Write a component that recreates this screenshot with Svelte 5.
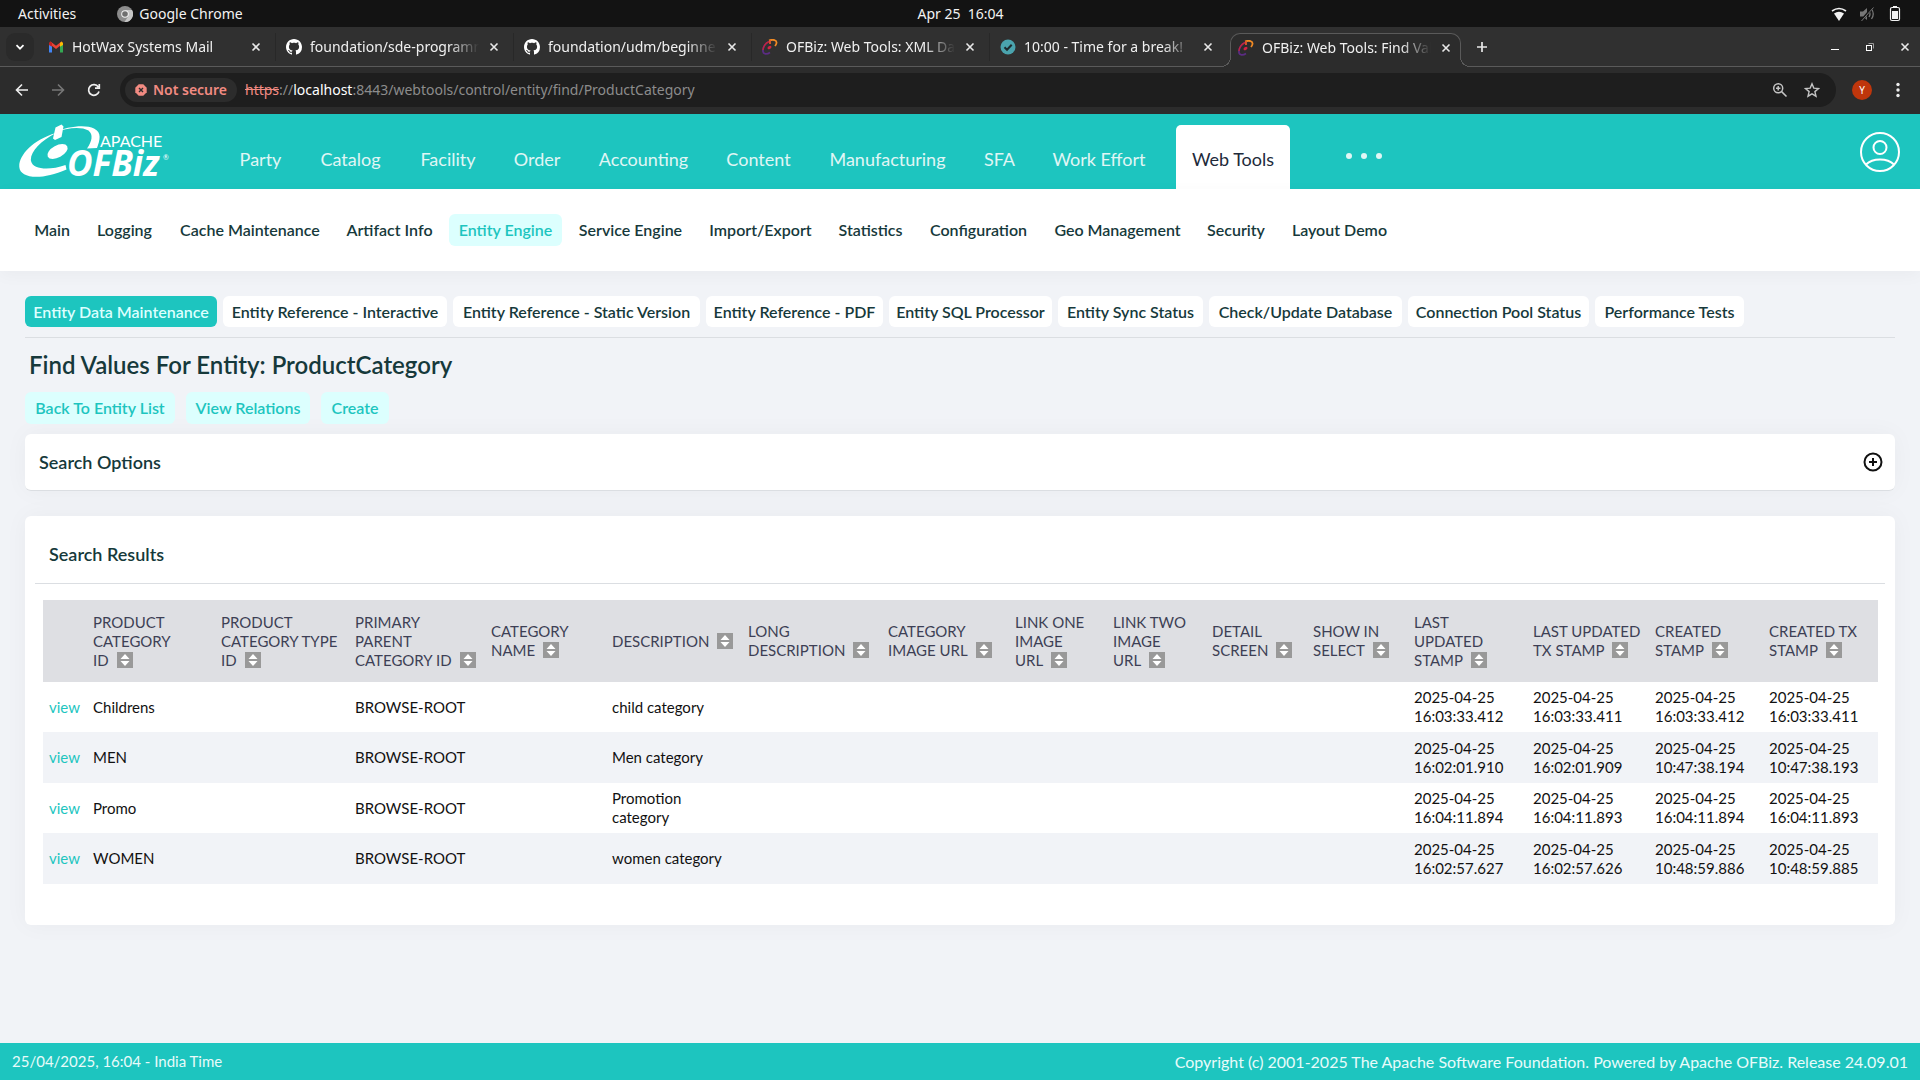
<script>
  const tabs = [
    { icon: 'gmail', title: 'HotWax Systems Mail' },
    { icon: 'github', title: 'foundation/sde-programming' },
    { icon: 'github', title: 'foundation/udm/beginner' },
    { icon: 'ofbiz', title: 'OFBiz: Web Tools: XML Data' },
    { icon: 'check', title: '10:00 - Time for a break!' },
    { icon: 'ofbiz', title: 'OFBiz: Web Tools: Find Values', active: true },
  ];
  const apps = ['Party', 'Catalog', 'Facility', 'Order', 'Accounting', 'Content', 'Manufacturing', 'SFA', 'Work Effort', 'Web Tools'];
  const sections = ['Main', 'Logging', 'Cache Maintenance', 'Artifact Info', 'Entity Engine', 'Service Engine', 'Import/Export', 'Statistics', 'Configuration', 'Geo Management', 'Security', 'Layout Demo'];
  const tools = ['Entity Data Maintenance', 'Entity Reference - Interactive', 'Entity Reference - Static Version', 'Entity Reference - PDF', 'Entity SQL Processor', 'Entity Sync Status', 'Check/Update Database', 'Connection Pool Status', 'Performance Tests'];
  const columns = [
    { w: 128, lines: ['PRODUCT', 'CATEGORY', 'ID'] },
    { w: 134, lines: ['PRODUCT', 'CATEGORY TYPE', 'ID'] },
    { w: 136, lines: ['PRIMARY', 'PARENT', 'CATEGORY ID'] },
    { w: 121, lines: ['CATEGORY', 'NAME'] },
    { w: 136, lines: ['DESCRIPTION'] },
    { w: 140, lines: ['LONG', 'DESCRIPTION'] },
    { w: 127, lines: ['CATEGORY', 'IMAGE URL'] },
    { w: 98, lines: ['LINK ONE', 'IMAGE', 'URL'] },
    { w: 99, lines: ['LINK TWO', 'IMAGE', 'URL'] },
    { w: 101, lines: ['DETAIL', 'SCREEN'] },
    { w: 101, lines: ['SHOW IN', 'SELECT'] },
    { w: 119, lines: ['LAST', 'UPDATED', 'STAMP'] },
    { w: 122, lines: ['LAST UPDATED', 'TX STAMP'] },
    { w: 114, lines: ['CREATED', 'STAMP'] },
    { w: 115, lines: ['CREATED TX', 'STAMP'] },
  ];
  const rows = [
    { id: 'Childrens', desc: ['child category'], times: ['16:03:33.412', '16:03:33.411', '16:03:33.412', '16:03:33.411'] },
    { id: 'MEN', desc: ['Men category'], times: ['16:02:01.910', '16:02:01.909', '10:47:38.194', '10:47:38.193'] },
    { id: 'Promo', desc: ['Promotion', 'category'], times: ['16:04:11.894', '16:04:11.893', '16:04:11.894', '16:04:11.893'] },
    { id: 'WOMEN', desc: ['women category'], times: ['16:02:57.627', '16:02:57.626', '10:48:59.886', '10:48:59.885'] },
  ];
</script>

{#snippet favicon(kind)}
  {#if kind === 'gmail'}
    <svg class="fav" viewBox="0 0 16 16">
      <path d="M1 13.5V4h3v9.500z" fill="#4285f4" />
      <path d="M12 13.500V4h3v9.500z" fill="#34a853" />
      <path d="M1 4.500 2.500 2.600 8 6.800l5.500-4.200L15 4.500 8 10z" fill="#ea4335" />
      <path d="M12 4l1.500-1.400L15 4v2l-3 1.800z" fill="#fbbc04" />
      <path d="M4 4 2.500 2.600 1 4v2l3 1.800z" fill="#c5221f" />
    </svg>
  {:else if kind === 'github'}
    <svg class="fav" viewBox="0 0 16 16" fill="#fff">
      <path d="M8 0C3.580 0 0 3.580 0 8c0 3.540 2.290 6.530 5.470 7.590.4.070.55-.17.55-.38 0-.19-.01-.82-.01-1.490-2.010.37-2.530-.49-2.690-.94-.09-.23-.48-.94-.82-1.130-.28-.15-.68-.52-.01-.53.63-.01 1.080.58 1.230.82.72 1.210 1.870.87 2.330.66.070-.52.280-.87.510-1.070-1.780-.2-3.640-.89-3.640-3.950 0-.87.310-1.590.820-2.150-.080-.2-.360-1.020.080-2.120 0 0 .670-.210 2.200.820.640-.180 1.320-.270 2-.270s1.360.090 2 .270c1.530-1.040 2.200-.820 2.200-.820.440 1.100.160 1.920.080 2.120.510.560.820 1.270.820 2.150 0 3.070-1.870 3.750-3.650 3.950.290.250.540.730.540 1.480 0 1.070-.010 1.930-.010 2.200 0 .210.150.460.550.380A8.010 8.010 0 0 0 16 8c0-4.420-3.580-8-8-8z" />
    </svg>
  {:else if kind === 'check'}
    <svg class="fav" viewBox="0 0 16 16">
      <circle cx="8" cy="8" r="7.500" fill="#4aa3ad" />
      <path d="M4.500 8.200 7 10.700l4.700-5" fill="none" stroke="#1e2a2d" stroke-width="2" />
    </svg>
  {:else}
    <svg class="fav" viewBox="0 0 16 16" fill="none">
      <path d="M7 2.500C3 4 .6 9 1 12.500c.4 3 4 3 7 1" stroke="#5b2c83" stroke-width="1.800" />
      <path d="M7.500 2.300C3.500 4 1.200 7.500 1 11" stroke="#c8233a" stroke-width="1.300" />
      <path d="M7 1.500c4-1.500 8-.5 7.500 2.500-.2 1.500-.8 2.200-1.500 3" stroke="#f08a24" stroke-width="1.800" />
      <path d="M8 1v4" stroke="#e0562b" stroke-width="1.800" />
      <ellipse cx="7.500" cy="8.500" rx="2.200" ry="1.400" fill="#d22344" transform="rotate(-35 7.500 8.500)" />
    </svg>
  {/if}
{/snippet}

{#snippet cross()}
  <svg class="x" viewBox="0 0 10 10"><path d="M1.500 1.500l7 7M8.500 1.500l-7 7" stroke="#e8e8e8" stroke-width="1.600" /></svg>
{/snippet}

<div class="screen">
  <div class="desktop-bar">
    <div class="left">
      <button type="button">Activities</button>
      <button type="button" class="running">
        <svg width="16" height="16" viewBox="0 0 16 16">
          <circle cx="8" cy="8" r="8" fill="#8c8c8c" />
          <path d="M8 4h7a8 8 0 0 1-7.500 12L11.400 10z" fill="#c6c6c6" />
          <circle cx="8" cy="8" r="3.800" fill="#f2f2f2" /><circle cx="8" cy="8" r="2.800" fill="#6f6f6f" />
        </svg>
        Google Chrome
      </button>
    </div>
    <button type="button" class="clock">Apr 25&nbsp; 16:04</button>
    <div class="status">
      <svg width="16" height="16" viewBox="0 0 16 16"><path d="M8 15 3 7.500q5-3.500 10 0z" fill="#f2f2f2" /><path d="M1 5q7-5 14 0" fill="none" stroke="#f2f2f2" stroke-width="1.600" /></svg>
      <svg width="16" height="16" viewBox="0 0 16 16"><path d="M1 5.500h3L8 2v12l-4-3.500H1z" fill="#777" /><path d="M10 5q2 3 0 6M12.500 3q3.500 5 0 10" fill="none" stroke="#777" stroke-width="1.300" /><path d="M14 1 2 15" stroke="#131313" stroke-width="2.500" /><path d="M14.500 1.500 2.500 15" stroke="#777" /></svg>
      <svg width="16" height="16" viewBox="0 0 16 16"><path d="M6 0h4v2H6z" fill="#f2f2f2" /><rect x="3.500" y="1.500" width="9" height="13" rx="1.500" fill="none" stroke="#f2f2f2" stroke-width="1.200" /><rect x="5" y="5" width="6" height="8" fill="#f2f2f2" /></svg>
    </div>
  </div>

  <div class="tabstrip">
    <button type="button" class="tabsearch" aria-label="Search tabs">
      <svg width="10" height="10" viewBox="0 0 10 10"><path d="M1.500 3.200 5 6.700l3.500-3.500" fill="none" stroke="#fff" stroke-width="1.700" /></svg>
    </button>
    <div class="tabs">
      {#each tabs as tab}
        <div class="tab" class:active={tab.active}>
          {@render favicon(tab.icon)}
          <span class="tabtitle">{tab.title}</span>
          <button type="button" aria-label="Close tab">{@render cross()}</button>
        </div>
      {/each}
    </div>
    <button type="button" class="newtab" aria-label="New tab">
      <svg width="12" height="12" viewBox="0 0 12 12"><path d="M6 1v10M1 6h10" stroke="#e8e8e8" stroke-width="1.700" /></svg>
    </button>
    <div class="window">
      <button type="button" aria-label="Minimize"><svg width="10" height="10" viewBox="0 0 10 10"><path d="M1 7.500h8" stroke="#fff" /></svg></button>
      <button type="button" aria-label="Restore"><svg width="10" height="10" viewBox="0 0 10 10" fill="none"><path d="M3.500 1.500h5v5" stroke="#999" /><rect x="1.500" y="3.500" width="5" height="5" stroke="#fff" /></svg></button>
      <button type="button" aria-label="Close window">{@render cross()}</button>
    </div>
  </div>

  <div class="toolbar">
    <div class="navbuttons">
      <button type="button" aria-label="Back"><svg width="14" height="14" viewBox="0 0 14 14" fill="none" stroke="#eee" stroke-width="1.600"><path d="M13 7H2M7 1.500 1.500 7 7 12.500" /></svg></button>
      <button type="button" aria-label="Forward"><svg width="14" height="14" viewBox="0 0 14 14" fill="none" stroke="#777" stroke-width="1.600"><path d="M1 7h11M7 1.500 12.500 7 7 12.500" /></svg></button>
      <button type="button" aria-label="Reload"><svg width="14" height="14" viewBox="0 0 14 14" fill="none" stroke="#eee" stroke-width="1.700"><path d="M12 8.500A5.300 5.300 0 1 1 11.300 4M12.300 1v4.200H8" /></svg></button>
    </div>
    <div class="omnibox">
      <button type="button" class="chip">
        <svg width="12" height="12" viewBox="0 0 12 12"><path d="M3.700.3h4.600l3.400 3.400v4.600l-3.400 3.400H3.700L.3 8.300V3.700z" fill="#f28b82" /><path d="M4 4l4 4M8 4l-4 4" stroke="#2c2c2c" stroke-width="1.400" /></svg>
        Not secure
      </button>
      <div class="url"><s>https</s>://<b>localhost</b>:8443/webtools/control/entity/find/ProductCategory</div>
      <button type="button" aria-label="Zoom"><svg width="16" height="16" viewBox="0 0 16 16" fill="none" stroke="#c4c4c4" stroke-width="1.500"><circle cx="6.200" cy="6.200" r="4.500" /><path d="M9.600 9.600 14.500 14.500M6.200 4v4.400M4 6.200h4.400" /></svg></button>
      <button type="button" aria-label="Bookmark"><svg width="16" height="16" viewBox="0 0 16 16" fill="none" stroke="#c4c4c4" stroke-width="1.400"><path d="M8 1.800l1.800 4.300 4.700.4-3.600 3.100 1.100 4.600L8 11.800l-4 2.400 1.100-4.600L1.500 6.500l4.700-.4z" /></svg></button>
    </div>
    <button type="button" class="profile">Y</button>
    <button type="button" class="menu" aria-label="Menu"><svg width="4" height="16" viewBox="0 0 4 16" fill="#eee"><circle cx="2" cy="2.500" r="1.700" /><circle cx="2" cy="8" r="1.700" /><circle cx="2" cy="13.500" r="1.700" /></svg></button>
  </div>

  <header>
    <a class="logo" href="#home" aria-label="Apache OFBiz">
      <svg width="152" height="56" viewBox="0 0 152 56">
        <path d="M37 9C13 16-.5 32 .3 43c.7 11 21 14 47.200 2.500l-1-4.500C31 46.500 14 46 12 37 10.500 29 21 17 37 9z" fill="#fff" />
        <path d="M35 8.500C49 2 67 .5 75 4.500c8 4 6 11.500 3 19.500l-10 .5c5-7 6.500-14 1.500-18C62 2.500 49 3.500 35 8.500z" fill="#fff" />
        <path d="M36.500 3.500l6-3 2 2L42.500 13l-6.500 3-2-1.500z" fill="#fff" />
        <ellipse cx="38.500" cy="27.500" rx="11" ry="6" fill="#fff" transform="rotate(-28 38.500 27.500)" />
        <text class="apache" x="81" y="23">APACHE</text>
        <text class="ofbiz" x="48" y="52">OFBiz</text>
        <text class="reg" x="144" y="36">®</text>
      </svg>
    </a>
    <nav class="apps">
      {#each apps as app}
        <a href="#{app}" class:current={app === 'Web Tools'}>{app}</a>
      {/each}
    </nav>
    <button type="button" class="more" aria-label="More applications">
      <svg width="36" height="8" viewBox="0 0 36 8" fill="#e0f6f5"><circle cx="3" cy="4" r="3" /><circle cx="18" cy="4" r="3" /><circle cx="33" cy="4" r="3" /></svg>
    </button>
    <button type="button" class="user" aria-label="User preferences">
      <svg width="40" height="40" viewBox="0 0 40 40" fill="none" stroke="#fff" stroke-width="2"><circle cx="20" cy="20" r="19" /><circle cx="20" cy="15.500" r="6.500" /><path d="M6 32.500c3-3 8-5 14-5s11 2 14 5" /></svg>
    </button>
  </header>

  <nav class="sections">
    {#each sections as s}
      <a href="#{s}" class:current={s === 'Entity Engine'}>{s}</a>
    {/each}
  </nav>

  <main>
    <nav class="tools">
      {#each tools as t, i}
        <a href="#{t}" class:current={i === 0}>{t}</a>
      {/each}
    </nav>
    <h1>Find Values For Entity: ProductCategory</h1>
    <div class="actions">
      <a href="#list">Back To Entity List</a>
      <a href="#relations">View Relations</a>
      <a href="#create">Create</a>
    </div>
    <section class="options">
      <h2>Search Options</h2>
      <button type="button" aria-label="Expand search options">
        <svg width="20" height="20" viewBox="0 0 20 20" fill="none" stroke="#111" stroke-width="2"><circle cx="10" cy="10" r="8.500" /><path d="M10 6v8M6 10h8" /></svg>
      </button>
    </section>
    <section class="results">
      <h2>Search Results</h2>
      <table>
        <colgroup>
          <col class="viewcol" />
          {#each columns as c}<col style:width="{c.w}px" />{/each}
        </colgroup>
        <thead>
          <tr>
            <th></th>
            {#each columns as c}
              <th>
                {#each c.lines as line, i}{#if i > 0}<br />{/if}{line}{/each}<button type="button" aria-label="Sort"><svg width="16" height="16" viewBox="0 0 16 16"><path d="M8 2l4.500 5h-9zM8 14l4.500-5h-9z" fill="#fff" /></svg></button>
              </th>
            {/each}
          </tr>
        </thead>
        <tbody>
          {#each rows as r}
            <tr>
              <td><a href="#{r.id}">view</a></td>
              <td>{r.id}</td>
              <td></td>
              <td>BROWSE-ROOT</td>
              <td></td>
              <td>{#each r.desc as line, i}{#if i > 0}<br />{/if}{line}{/each}</td>
              <td></td><td></td><td></td><td></td><td></td><td></td>
              {#each r.times as t}<td>2025-04-25<br />{t}</td>{/each}
            </tr>
          {/each}
        </tbody>
      </table>
    </section>
  </main>

  <footer>
    <span class="stamp">25/04/2025, 16:04 - India Time</span>
    <span>Copyright (c) 2001-2025 The Apache Software Foundation. Powered by Apache OFBiz. Release 24.09.01</span>
  </footer>
</div>

<style>
  :global(body) { margin: 0; background: #f1f3f7; }
  * { box-sizing: border-box; }
  svg { display: block; flex: none; }
  a { color: inherit; text-decoration: none; white-space: nowrap; }
  button { display: flex; align-items: center; justify-content: center; padding: 0; border: 0; background: none; color: inherit; font: inherit; white-space: nowrap; }
  .screen { display: flex; flex-direction: column; min-height: 100vh; font: 15px/19px Lato, sans-serif; color: #111; }

  .desktop-bar { display: grid; grid-template-columns: 1fr auto 1fr; align-items: center; height: 27px; padding: 0 17px 0 18px; background: #131313; color: #f2f2f2; font: 14px/20px "Noto Sans", sans-serif; }
  .left, .running { display: flex; }
  .left { gap: 41px; }
  .running { gap: 6px; }
  .status { display: flex; justify-content: flex-end; gap: 12px; }

  .tabstrip { display: flex; height: 40px; padding: 6px 10px 0 6px; background: #303030; box-shadow: inset 0 -1px #5a5a5a; color: #f0f0f0; font: 14px/20px "Noto Sans", sans-serif; }
  .tabsearch { width: 28px; height: 28px; border-radius: 9px; background: #2a2a2a; }
  .tabs { display: flex; padding-left: 4px; }
  .tab { display: flex; align-items: center; width: 238px; height: 28px; padding: 0 14px 0 10px; border-right: 1px solid #282828; }
  .tab:nth-child(5) { border-right-color: transparent; }
  .fav { width: 16px; height: 16px; margin-right: 8px; }
  .tabtitle { flex: 1; overflow: hidden; white-space: nowrap; mask-image: linear-gradient(to right, #000 calc(100% - 40px), transparent calc(100% - 10px)); }
  .x { width: 10px; height: 10px; }
  .tab.active { position: relative; width: 231px; height: 34px; margin-left: 2px; padding: 0 9px 6px 7px; border: 1px solid #5a5a5a; border-bottom: 0; border-radius: 10px 10px 0 0; background: #2c2c2c; }
  .active::before, .active::after { content: ''; position: absolute; bottom: 0; width: 10px; height: 10px; }
  .active::before { left: -10px; background: radial-gradient(circle at 0 0, #303030 9px, #5a5a5a 9px 10px, #2c2c2c 10px); }
  .active::after { right: -10px; background: radial-gradient(circle at 100% 0, #303030 9px, #5a5a5a 9px 10px, #2c2c2c 10px); }
  .newtab { width: 42px; height: 28px; }
  .window { display: flex; gap: 25px; height: 28px; margin-left: auto; }

  .toolbar { display: flex; align-items: center; height: 47px; padding: 0 20px 1px 15px; background: #2c2c2c; color: #8c8c8c; font: 14px/20px "Noto Sans", sans-serif; }
  .navbuttons { display: flex; gap: 22px; width: 105px; }
  .omnibox { display: flex; flex: 1; align-items: center; gap: 16px; height: 34px; padding: 0 16px 1px 5px; border-radius: 17px; background: #1e1e1e; }
  .chip { gap: 6px; width: 112px; height: 24px; border-radius: 12px; background: #2c2c2c; color: #f28b82; font-weight: 600; }
  .url { flex: 1; margin-left: -8px; font-size: 14px; }
  .url s { color: #f28b82; }
  .url b { color: #fff; font-weight: 400; }
  .profile { width: 20px; height: 20px; margin: 0 24px 0 16px; border-radius: 50%; background: #bf360c; color: #fff; font-size: 10px; }

  header { display: flex; height: 75px; padding: 0 20px 0 19px; background: #1dc5bf; color: #e0f6f5; }
  .logo { width: 202px; padding-top: 10px; }
  .apache { font: 16px Lato, sans-serif; fill: #fff; }
  .ofbiz { font: italic 700 35px "Open Sans", sans-serif; fill: #fff; }
  .reg { font: 7px Lato, sans-serif; fill: #fff; }
  .apps { display: grid; grid-template-columns: 79px 101px 94px 84px 129px 101px 157px 67px 132px 114px; margin-top: 11px; font-size: 18px; line-height: 24px; text-align: center; }
  .apps a { padding-top: 22px; }
  .apps .current { margin-left: 11px; margin-right: -11px; border-radius: 5px 5px 0 0; background: #fff; color: #212a3a; }
  .more { margin: 38px 0 0 67px; height: 8px; }
  .user { height: 40px; margin: 18px 0 0 auto; }

  .sections { display: grid; grid-template-columns: 54px 79px 160px 107px 113px 125px 123px 85px 119px 147px 78px 117px; gap: 6px; height: 82px; padding: 25px 25px 0; background: #fff; box-shadow: 0 4px 16px #00000009; color: #16393b; font-size: 16px; font-weight: 600; text-align: center; }
  .sections a, .actions a { height: 32px; border-radius: 6px; line-height: 31px; }
  .sections .current, .actions a { background: #dcfffe; color: #1dc5bf; }

  main { flex: 1; padding: 25px 25px 0; }
  .tools { display: grid; grid-template-columns: 192px 224px 247px 177px 163px 145px 193px 181px 149px; gap: 6px; height: 42px; border-bottom: 1px solid #dbdee2; color: #16393b; font-size: 16px; font-weight: 600; text-align: center; }
  .tools a { height: 31px; border-radius: 6px; background: #fff; line-height: 31px; }
  .tools .current { background: #1dc5bf; color: #dcfffe; }
  h1, h2 { margin: 0; color: #16393b; font-weight: 600; }
  h1 { padding: 12px 4px; font-size: 24px; line-height: 30px; }
  .actions { display: grid; grid-template-columns: 150px 124px 68px; gap: 11px; font-size: 16px; font-weight: 600; text-align: center; }
  section { border-radius: 6px; background: #fff; box-shadow: 0 0 24px #0000000a; }
  h2 { font-size: 18px; line-height: 24px; }
  .options { display: flex; align-items: center; justify-content: space-between; height: 57px; margin: 10px 0 25px; padding: 0 12px 0 14px; border-bottom: 1px solid #dbdee2; }
  .results { padding: 0 10px 41px; }
  .results h2 { height: 68px; padding: 26px 14px 0; border-bottom: 1px solid #dbdee2; }
  table { width: calc(100% - 15px); margin: 16px 7px 0 8px; border-collapse: collapse; table-layout: fixed; }
  .viewcol { width: 44px; }
  th { height: 82px; padding: 0 0 0 6px; background: #dedfe3; color: #3d3f55; font-weight: 400; text-align: left; white-space: nowrap; }
  th button { display: inline-flex; height: 16px; margin-left: 8px; background: #999; vertical-align: -2px; }
  td { height: 50px; padding: 6px; white-space: nowrap; }
  tbody tr:nth-child(even) { background: #f1f3f7; }
  tbody tr:nth-child(even) td { height: 51px; }
  td a { color: #1dc5bf; }

  footer { display: flex; align-items: center; justify-content: space-between; height: 37px; padding: 0 12px; background: #1dc5bf; color: #e8fbfa; font-size: 16px; }
  .stamp { font-size: 15px; }
</style>
